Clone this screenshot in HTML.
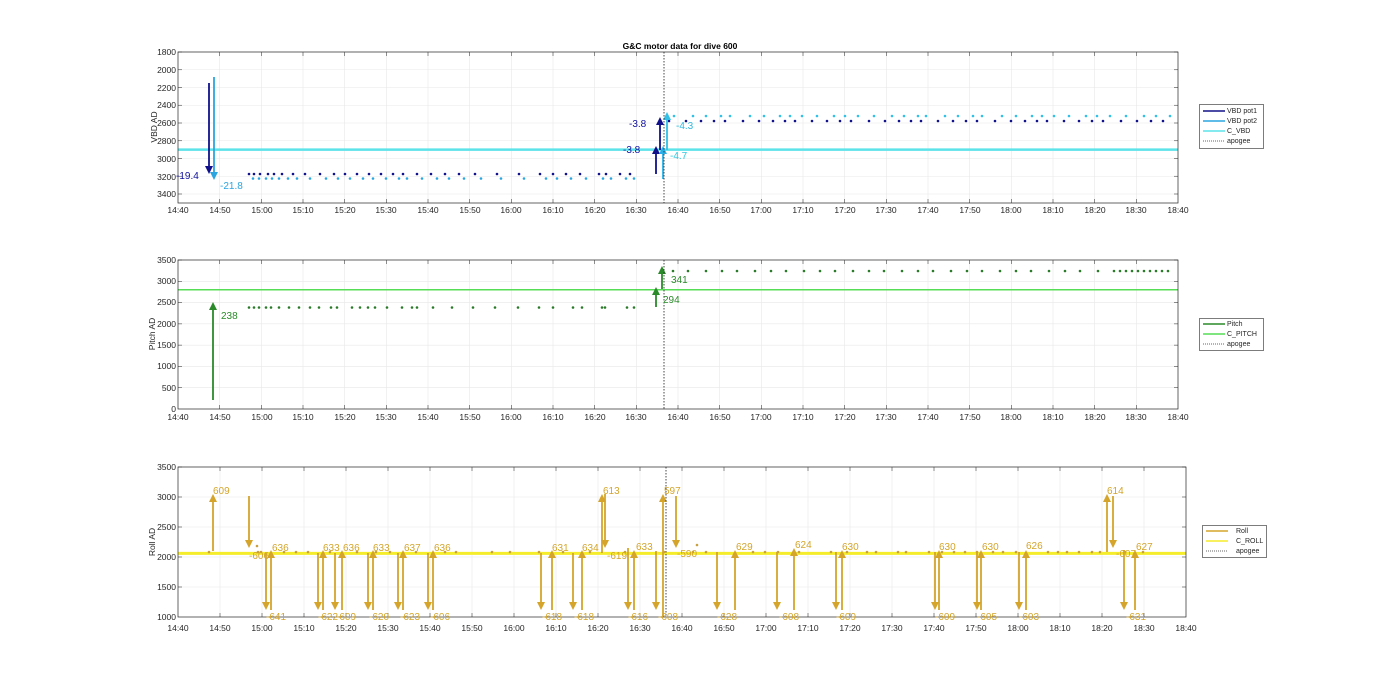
<!DOCTYPE html>
<html><head><meta charset="utf-8"><style>
html,body{margin:0;padding:0;background:#fff;}
svg{display:block;font-family:"Liberation Sans",Arial,sans-serif;}
.t{font-size:8.5px;fill:#262626;}
.yl{font-size:8.5px;fill:#262626;text-anchor:end;}
.xl{font-size:8.5px;fill:#262626;text-anchor:middle;}
.lg{font-size:7px;fill:#262626;}
</style></head><body>
<svg id="s" width="1400" height="693" viewBox="0 0 1400 693" xmlns="http://www.w3.org/2000/svg">
<rect width="1400" height="693" fill="#fff"/>
<g id="g"></g>
<text x="680" y="49" text-anchor="middle" style="font-size:8.5px;font-weight:bold;fill:#000">G&amp;C motor data for dive 600</text>
<!-- y labels plot1 -->
<g class="yl">
<text x="176" y="55">1800</text><text x="176" y="73">2000</text><text x="176" y="91">2200</text><text x="176" y="108">2400</text><text x="176" y="126">2600</text><text x="176" y="144">2800</text><text x="176" y="162">3000</text><text x="176" y="180">3200</text><text x="176" y="197">3400</text>
<text x="176" y="263">3500</text><text x="176" y="284">3000</text><text x="176" y="305">2500</text><text x="176" y="327">2000</text><text x="176" y="348">1500</text><text x="176" y="369">1000</text><text x="176" y="391">500</text><text x="176" y="412">0</text>
<text x="176" y="470">3500</text><text x="176" y="500">3000</text><text x="176" y="530">2500</text><text x="176" y="560">2000</text><text x="176" y="590">1500</text><text x="176" y="620">1000</text>
</g>
<g class="xl" id="xl1">
<text x="178" y="213">14:40</text><text x="220" y="213">14:50</text><text x="262" y="213">15:00</text><text x="303" y="213">15:10</text><text x="345" y="213">15:20</text><text x="386" y="213">15:30</text><text x="428" y="213">15:40</text><text x="470" y="213">15:50</text><text x="511" y="213">16:00</text><text x="553" y="213">16:10</text><text x="595" y="213">16:20</text><text x="636" y="213">16:30</text><text x="678" y="213">16:40</text><text x="720" y="213">16:50</text><text x="761" y="213">17:00</text><text x="803" y="213">17:10</text><text x="845" y="213">17:20</text><text x="886" y="213">17:30</text><text x="928" y="213">17:40</text><text x="970" y="213">17:50</text><text x="1011" y="213">18:00</text><text x="1053" y="213">18:10</text><text x="1095" y="213">18:20</text><text x="1136" y="213">18:30</text><text x="1178" y="213">18:40</text>
</g>
<g class="xl">
<text x="178" y="420">14:40</text><text x="220" y="420">14:50</text><text x="262" y="420">15:00</text><text x="303" y="420">15:10</text><text x="345" y="420">15:20</text><text x="386" y="420">15:30</text><text x="428" y="420">15:40</text><text x="470" y="420">15:50</text><text x="511" y="420">16:00</text><text x="553" y="420">16:10</text><text x="595" y="420">16:20</text><text x="636" y="420">16:30</text><text x="678" y="420">16:40</text><text x="720" y="420">16:50</text><text x="761" y="420">17:00</text><text x="803" y="420">17:10</text><text x="845" y="420">17:20</text><text x="886" y="420">17:30</text><text x="928" y="420">17:40</text><text x="970" y="420">17:50</text><text x="1011" y="420">18:00</text><text x="1053" y="420">18:10</text><text x="1095" y="420">18:20</text><text x="1136" y="420">18:30</text><text x="1178" y="420">18:40</text>
</g>
<g class="xl">
<text x="178" y="631">14:40</text><text x="220" y="631">14:50</text><text x="262" y="631">15:00</text><text x="304" y="631">15:10</text><text x="346" y="631">15:20</text><text x="388" y="631">15:30</text><text x="430" y="631">15:40</text><text x="472" y="631">15:50</text><text x="514" y="631">16:00</text><text x="556" y="631">16:10</text><text x="598" y="631">16:20</text><text x="640" y="631">16:30</text><text x="682" y="631">16:40</text><text x="724" y="631">16:50</text><text x="766" y="631">17:00</text><text x="808" y="631">17:10</text><text x="850" y="631">17:20</text><text x="892" y="631">17:30</text><text x="934" y="631">17:40</text><text x="976" y="631">17:50</text><text x="1018" y="631">18:00</text><text x="1060" y="631">18:10</text><text x="1102" y="631">18:20</text><text x="1144" y="631">18:30</text><text x="1186" y="631">18:40</text>
</g>
<text transform="translate(157,127) rotate(-90)" text-anchor="middle" class="t">VBD AD</text>
<text transform="translate(155,334) rotate(-90)" text-anchor="middle" class="t">Pitch AD</text>
<text transform="translate(155,542) rotate(-90)" text-anchor="middle" class="t">Roll AD</text>
<!-- plot1 value labels -->
<g style="font-size:10px">
<text x="176" y="179" fill="#1010a0">-19.4</text>
<text x="220" y="189" fill="#2aa5e0">-21.8</text>
<text x="623" y="153" fill="#1010a0">-3.8</text>
<text x="629" y="127" fill="#1010a0">-3.8</text>
<text x="670" y="159" fill="#30c8e0">-4.7</text>
<text x="676" y="129" fill="#30b8e0">-4.3</text>
<text x="221" y="319" fill="#2a8a2a">238</text>
<text x="663" y="303" fill="#2a8a2a">294</text>
<text x="671" y="283" fill="#2a8a2a">341</text>
</g>
<g style="font-size:10px" fill="#d4a52a">
<text x="213" y="494">609</text><text x="249" y="559">-606</text><text x="266" y="620">-641</text><text x="272" y="551">636</text>
<text x="318" y="620">-622</text><text x="323" y="551">633</text><text x="336" y="620">-609</text><text x="343" y="551">636</text>
<text x="369" y="620">-620</text><text x="373" y="551">633</text><text x="400" y="620">-623</text><text x="404" y="551">637</text>
<text x="430" y="620">-606</text><text x="434" y="551">636</text><text x="542" y="620">-618</text><text x="552" y="551">631</text>
<text x="574" y="620">-618</text><text x="582" y="551">634</text><text x="603" y="494">613</text><text x="607" y="559">-619</text>
<text x="628" y="620">-616</text><text x="636" y="550">633</text><text x="658" y="620">-608</text><text x="664" y="494">597</text><text x="677" y="557">-590</text>
<text x="717" y="620">-628</text><text x="736" y="550">629</text><text x="779" y="620">-608</text><text x="795" y="548">624</text>
<text x="836" y="620">-609</text><text x="842" y="550">630</text><text x="935" y="620">-609</text><text x="939" y="550">630</text>
<text x="977" y="620">-605</text><text x="982" y="550">630</text><text x="1019" y="620">-603</text><text x="1026" y="549">626</text>
<text x="1107" y="494">614</text><text x="1116" y="557">-607</text><text x="1126" y="620">-631</text><text x="1136" y="550">627</text>
</g>
<!-- legends -->
<g>
<rect x="1199.5" y="104.5" width="64" height="44" fill="#fff" stroke="#262626" stroke-width="0.6"/>
<line x1="1203" y1="111" x2="1225" y2="111" stroke="#10108a" stroke-width="1.6"/><text class="lg" x="1227" y="113">VBD pot1</text>
<line x1="1203" y1="121" x2="1225" y2="121" stroke="#2aa5e0" stroke-width="1.6"/><text class="lg" x="1227" y="123">VBD pot2</text>
<line x1="1203" y1="131" x2="1225" y2="131" stroke="#5ce3ea" stroke-width="1.6"/><text class="lg" x="1227" y="133">C_VBD</text>
<line x1="1203" y1="141" x2="1225" y2="141" stroke="#333" stroke-width="0.8" stroke-dasharray="1,1"/><text class="lg" x="1227" y="143">apogee</text>
<rect x="1199.5" y="318.5" width="64" height="32" fill="#fff" stroke="#262626" stroke-width="0.6"/>
<line x1="1203" y1="324" x2="1225" y2="324" stroke="#2a8a2a" stroke-width="1.6"/><text class="lg" x="1227" y="326">Pitch</text>
<line x1="1203" y1="334" x2="1225" y2="334" stroke="#55dd55" stroke-width="1.6"/><text class="lg" x="1227" y="336">C_PITCH</text>
<line x1="1203" y1="344" x2="1225" y2="344" stroke="#333" stroke-width="0.8" stroke-dasharray="1,1"/><text class="lg" x="1227" y="346">apogee</text>
<rect x="1202.5" y="525.5" width="64" height="32" fill="#fff" stroke="#262626" stroke-width="0.6"/>
<line x1="1206" y1="531" x2="1228" y2="531" stroke="#d4a52a" stroke-width="1.6"/><text class="lg" x="1236" y="533">Roll</text>
<line x1="1206" y1="541" x2="1228" y2="541" stroke="#f5ec2a" stroke-width="1.6"/><text class="lg" x="1236" y="543">C_ROLL</text>
<line x1="1206" y1="551" x2="1228" y2="551" stroke="#333" stroke-width="0.8" stroke-dasharray="1,1"/><text class="lg" x="1236" y="553">apogee</text>
</g>
</svg>
<script>
(function(){
var g=document.getElementById('g'),NS='http://www.w3.org/2000/svg',h='';
function L(x1,y1,x2,y2,c,w,d){h+='<line x1="'+x1+'" y1="'+y1+'" x2="'+x2+'" y2="'+y2+'" stroke="'+c+'" stroke-width="'+w+'"'+(d?' stroke-dasharray="'+d+'"':'')+'/>';}
function D(x,y,c){h+='<circle cx="'+x+'" cy="'+y+'" r="1.3" fill="'+c+'"/>';}
function A(x,y1,y2,c){L(x,y1,x,y2+(y2<y1?6:-6),c,1.8);var s=y2<y1?1:-1;h+='<polygon points="'+(x-4)+','+(y2+8*s)+' '+(x+4)+','+(y2+8*s)+' '+x+','+y2+'" fill="'+c+'"/>';}
function axes(x0,x1,y0,y1,ys){
 h+='<rect x="'+x0+'" y="'+y0+'" width="'+(x1-x0)+'" height="'+(y1-y0)+'" fill="#fff"/>';
 var n=24,i;
 for(i=1;i<n;i++){var x=x0+(x1-x0)*i/n;L(x,y0,x,y1,'#e8e8e8',0.6);L(x,y0,x,y0+4,'#444',0.6);L(x,y1,x,y1-4,'#444',0.6);}
 ys.forEach(function(y){L(x0,y,x1,y,'#e8e8e8',0.6);L(x0,y,x0+4,y,'#444',0.6);L(x1,y,x1-4,y,'#444',0.6);});
}
function box(x0,x1,y0,y1){h+='<rect x="'+x0+'" y="'+y0+'" width="'+(x1-x0)+'" height="'+(y1-y0)+'" fill="none" stroke="#262626" stroke-width="0.7"/>';}
var y1s=[];for(var v=1800;v<=3400;v+=200)y1s.push(52+(v-1800)*0.08875);
axes(178,1178,52,203,y1s);
var y2s=[];for(v=500;v<=3500;v+=500)y2s.push(409-v*0.04257);
axes(178,1178,260,409,y2s);
var y3s=[];for(v=1500;v<=3500;v+=500)y3s.push(617-(v-1000)*0.06);
axes(178,1186,467,617,y3s);
// plot1
L(178,149.6,1178,149.6,'#5ce3ea',2.5);
var pre=[249,254,260,268,274,282,293,305,320,334,345,357,369,381,393,403,417,431,445,459,475,497,519,540,553,566,580,599,606,620,630];
pre.forEach(function(x,i){D(x,174,'#10108a');D(x+4+(i%3),178.5,'#2aa5e0');});
var post=[],x=669;while(x<1172){post.push(x);x+=10+((post.length*7)%9);}
post.forEach(function(x,i){D(x,121,'#10108a');D(x+5+(i%2)*2,116,'#30c0e8');});
A(209,83,174,'#10108a');A(214,77,180,'#2aa5e0');
A(656,174,146,'#10108a');A(660,150,117,'#10108a');A(663,179,146,'#2ab0e8');A(667,150,112,'#30c0e8');
// plot2
L(178,289.8,1178,289.8,'#55dd55',1.5);
[249,254,259,266,271,279,289,299,310,319,331,337,352,360,368,375,387,402,412,417,433,452,473,495,518,539,553,573,582,602,605,627,634].forEach(function(x){D(x,307.5,'#2a7a2a');});
var p=673;while(p<1172){D(p,271,'#2a7a2a');p+=p>1100?6:(12+((p*3)%7));}
A(213,400,302,'#2a8a2a');A(656,307,287,'#2a8a2a');A(662,289,266,'#2a8a2a');
// plot3
L(178,553.4,1186,553.4,'#f5ec2a',3);
[209,258,261,284,296,308,330,357,376,390,416,445,456,492,510,539,563,590,625,664,693,706,753,765,778,799,831,847,867,876,898,906,929,942,954,965,977,993,1003,1016,1048,1058,1067,1079,1092,1100,1125,1143].forEach(function(x){D(x,552,'#c8a040');});
D(697,545,'#c8a040');D(257,546,'#c8a040');
var gc='#d4a52a';
A(213,551,494,gc);A(249,496,548,gc);A(266,553,610,gc);A(271,610,550,gc);
A(318,553,610,gc);A(323,610,550,gc);A(335,553,610,gc);A(342,610,550,gc);
A(368,553,610,gc);A(373,610,550,gc);A(398,553,610,gc);A(403,610,550,gc);
A(428,553,610,gc);A(433,610,550,gc);A(541,553,610,gc);A(552,610,550,gc);
A(573,553,610,gc);A(582,610,550,gc);A(602,553,494,gc);A(605,494,548,gc);
A(628,548,610,gc);A(634,610,550,gc);A(656,551,610,gc);A(663,617,494,gc);A(676,496,548,gc);
A(717,552,610,gc);A(735,610,550,gc);A(777,552,610,gc);A(794,610,548,gc);
A(836,552,610,gc);A(842,610,550,gc);A(935,552,610,gc);A(939,610,550,gc);
A(977,552,610,gc);A(981,610,550,gc);A(1019,552,610,gc);A(1026,610,550,gc);
A(1107,552,494,gc);A(1113,496,548,gc);A(1124,550,610,gc);A(1135,610,550,gc);
// apogee
L(664,52,664,203,'#333',0.9,'1.5,1.5');L(664,260,664,409,'#333',0.9,'1.5,1.5');L(666,467,666,617,'#333',0.9,'1.5,1.5');
box(178,1178,52,203);box(178,1178,260,409);box(178,1186,467,617);
g.innerHTML=h;
})();
</script>
</body></html>
